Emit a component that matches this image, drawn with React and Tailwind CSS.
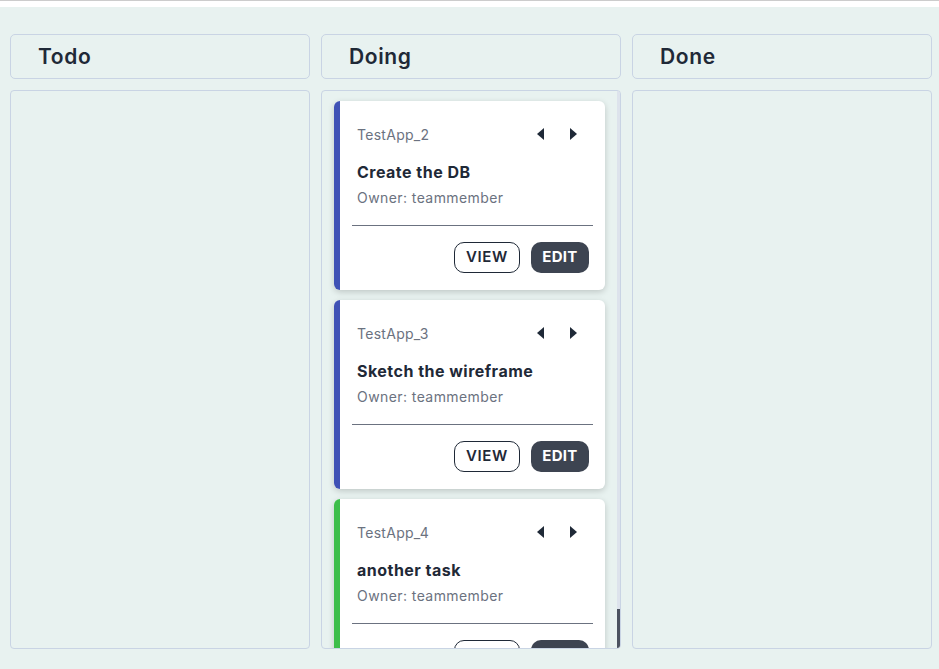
import React from "react";

const cards = [
  { id: "TestApp_2", title: "Create the DB", owner: "teammember", color: "bg-[#3f51b5]" },
  { id: "TestApp_3", title: "Sketch the wireframe", owner: "teammember", color: "bg-[#3f51b5]" },
  { id: "TestApp_4", title: "another task", owner: "teammember", color: "bg-[#3dbe4b]" },
];

function Arrow({ dir }) {
  return (
    <svg width="7" height="12" viewBox="0 0 7 12" className="text-[#1f2937]">
      {dir === "left" ? (
        <path d="M7 0 L0 6 L7 12 Z" fill="currentColor" />
      ) : (
        <path d="M0 0 L7 6 L0 12 Z" fill="currentColor" />
      )}
    </svg>
  );
}

function Card({ c }) {
  return (
    <div className="flex h-[189px] shrink-0 rounded-md bg-white shadow-[0_2px_6px_rgba(0,0,0,0.18)] overflow-hidden">
      <div className={`w-[6px] shrink-0 ${c.color}`} />
      <div className="flex-1 flex flex-col pt-[22px] px-3">
        <div className="flex items-center justify-between pl-[5px] pr-[16px] h-[22px]">
          <span className="text-[14px] text-[#6b7280] tracking-[0.02em]">{c.id}</span>
          <div className="flex items-center gap-[26px]">
            <Arrow dir="left" />
            <Arrow dir="right" />
          </div>
        </div>
        <div className="pl-[5px] mt-[15px] text-[16px] font-bold text-[#1f2937] leading-[24px] tracking-[0.03em]">{c.title}</div>
        <div className="pl-[5px] mt-[4px] text-[14px] text-[#6b7280] leading-[20px] tracking-[0.03em]">Owner: {c.owner}</div>
        <div className="mt-[17px] border-t border-[#6b7280]" />
        <div className="flex justify-end gap-[11px] mt-[16px] pr-[4px]">
          <button className="h-[31px] w-[66px] rounded-[10px] border border-[#1f2937] text-[15px] font-semibold text-[#1f2937] tracking-[0.04em]">
            VIEW
          </button>
          <button className="h-[31px] w-[58px] rounded-[10px] bg-[#3d4451] text-[15px] font-bold text-white tracking-[0.02em]">
            EDIT
          </button>
        </div>
      </div>
    </div>
  );
}

function Column({ title, children, scroll }) {
  return (
    <div className="flex flex-col gap-[11px] w-[300px] shrink-0">
      <div className="h-[45px] rounded-[5px] border border-[#c9d4e4] flex items-center pl-[27px] text-[21px] font-semibold text-[#1f2937] tracking-[0.03em]">
        {title}
      </div>
      <div className="relative h-[559px] rounded-[4px] border border-[#c9d4e4] overflow-hidden">
        {scroll && (
          <>
            <div className="absolute top-0 bottom-0 right-0 w-[3px] bg-[#dde3ec]" />
            <div className="absolute bottom-0 right-0 w-[3px] h-[39px] bg-[#4b5260]" />
          </>
        )}
        <div className="flex flex-col gap-[10px] pt-[10px] pl-[12px] pr-[15px]">{children}</div>
      </div>
    </div>
  );
}

export default function App() {
  return (
    <div className="w-[939px] h-[669px] bg-[#e8f2f0] flex flex-col" style={{ fontFamily: "Inter, 'Noto Sans', sans-serif" }}>
      <div className="h-[7px] bg-white border-t border-[#cccccc] shrink-0" />
      <div className="flex gap-[11px] pl-[10px] pt-[27px]">
        <Column title="Todo" />
        <Column title="Doing" scroll>
          {cards.map((c) => (
            <Card key={c.id} c={c} />
          ))}
        </Column>
        <Column title="Done" />
      </div>
    </div>
  );
}
